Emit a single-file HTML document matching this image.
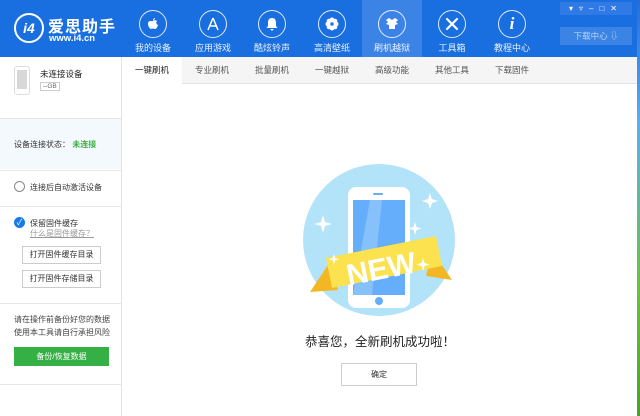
<!DOCTYPE html>
<html><head><meta charset="utf-8"><style>
*{margin:0;padding:0;box-sizing:border-box}
body{width:640px;height:416px;overflow:hidden;background:#fff;font-family:"Liberation Sans","Noto Sans CJK SC",sans-serif;position:relative}
.hdr{position:absolute;left:0;top:0;width:637px;height:57px;background:#1a6fe0}
.nav{position:absolute;top:0;width:60px;height:57px;text-align:center;color:#fff;font-size:9px}
.nav .ic{width:28px;height:28px;border:1.5px solid rgba(255,255,255,.85);border-radius:50%;margin:10px auto 0;display:flex;align-items:center;justify-content:center}
.nav .lb{margin-top:3px;opacity:.9}
.side{position:absolute;left:0;top:57px;width:122px;height:359px;border-right:1px solid #e3e3e3;font-size:8px;color:#333}
.tabs{position:absolute;left:122px;top:57px;width:515px;height:27px;background:#f5f5f5;border-bottom:1px solid #e3e3e3;font-size:8.5px;color:#555}
.tab{position:absolute;top:0;height:27px;line-height:27px;width:60px;text-align:center}
.btn{position:absolute;left:22px;width:79px;height:18px;border:1px solid #ccc;background:#fff;font-size:8px;text-align:center;line-height:16px;color:#333}
.hr{position:absolute;left:0;width:121px;border-top:1px solid #e6e6e6}
</style></head><body>
<div class="hdr">
 <div style="position:absolute;left:14px;top:13px;width:30px;height:30px;border:2px solid #fff;border-radius:50%;color:#fff;font-weight:bold;font-size:14px;text-align:center;line-height:26px;font-style:italic">i4</div>
 <div style="position:absolute;left:48px;top:13px;color:#fff;font-size:16px;font-weight:bold;letter-spacing:1px">爱思助手</div>
 <div style="position:absolute;left:49px;top:33px;color:#fff;font-size:9.5px;font-weight:bold">www.i4.cn</div>
 <div class="nav" style="left:123px"><div class="ic"><svg width="14" height="14" viewBox="0 0 14 14"><path d="M7 4c1-1 3-1 4 0-1 1-1 3 1 4-1 3-2 4-3 4s-1-.5-2-.5-1 .5-2 .5-3-3-3-5 1-3 2.5-3 1.5.5 2.5 0zM7 3.5C7 2 8 1 9 1c0 1-1 2.5-2 2.5z" fill="#fff"/></svg></div><div class="lb">我的设备</div></div>
 <div class="nav" style="left:183px"><div class="ic"><svg width="16" height="16" viewBox="0 0 16 16" fill="none" stroke="#fff" stroke-width="1.5"><path d="M8 2L3 14M8 2l5 12M4 10h8"/></svg></div><div class="lb">应用游戏</div></div>
 <div class="nav" style="left:242px"><div class="ic"><svg width="14" height="14" viewBox="0 0 14 14"><path d="M7 1c3 0 4 2 4 5v3l1.5 2h-11L3 9V6c0-3 1-5 4-5zM5.5 12h3a1.5 1.5 0 0 1-3 0z" fill="#fff"/></svg></div><div class="lb">酷炫铃声</div></div>
 <div class="nav" style="left:302px"><div class="ic"><svg width="16" height="16" viewBox="0 0 16 16" fill="#fff"><circle cx="8" cy="4" r="2.5"/><circle cx="8" cy="12" r="2.5"/><circle cx="4" cy="8" r="2.5"/><circle cx="12" cy="8" r="2.5"/><circle cx="5" cy="5" r="2.3"/><circle cx="11" cy="5" r="2.3"/><circle cx="5" cy="11" r="2.3"/><circle cx="11" cy="11" r="2.3"/></svg></div><div class="lb">高清壁纸</div></div>
 <div class="nav" style="left:362px;background:#3b84e6"><div class="ic"><svg width="16" height="14" viewBox="0 0 16 14" fill="#fff"><path d="M2 3l3-2 3 2 3-2 3 2-2 2 2 2-3 1v4H5V8L2 7l2-2z"/></svg></div><div class="lb">刷机越狱</div></div>
 <div class="nav" style="left:422px"><div class="ic"><svg width="16" height="16" viewBox="0 0 16 16" stroke="#fff" stroke-width="2.2" stroke-linecap="round"><path d="M3 3l10 10M13 3L3 13"/></svg></div><div class="lb">工具箱</div></div>
 <div class="nav" style="left:482px"><div class="ic" style="font-weight:bold;font-style:italic;font-family:'Liberation Serif',serif;font-size:17px">i</div><div class="lb">教程中心</div></div>
 <div style="position:absolute;left:560px;top:27px;width:72px;height:18px;background:#3b84e6;color:#bcd4f5;font-size:8.5px;line-height:18px;text-align:center">下载中心 ⇩</div>
 <div style="position:absolute;left:560px;top:2px;width:72px;height:13px;background:#2f7ae4;color:#fff;font-size:8px;line-height:13px;letter-spacing:6px;text-align:center">▾▿–□✕</div>
</div>
<div style="position:absolute;left:637px;top:0;width:3px;height:416px;background:linear-gradient(#2a6ad8,#5ab0f0 30%,#6fbf3a 70%,#4aa028)"></div>
<div class="side">
 <div style="position:absolute;left:14px;top:9px;width:16px;height:29px;border:1px solid #ddd;border-radius:3px;background:#fff"><div style="margin:3px 2px;height:19px;background:#d8d8d8"></div></div>
 <div style="position:absolute;left:40px;top:11px;font-size:8.5px;color:#222">未连接设备</div>
 <div style="position:absolute;left:40px;top:25px;border:1px solid #ccc;font-size:6.5px;padding:0 2px;color:#666">--GB</div>
 <div class="hr" style="top:61px"></div>
 <div style="position:absolute;left:0;top:62px;width:121px;height:50px;background:#f4f9fd"></div>
 <div style="position:absolute;left:14px;top:82px">设备连接状态： <span style="color:#3ab03e;font-weight:bold">未连接</span></div>
 <div class="hr" style="top:113px"></div>
 <div style="position:absolute;left:14px;top:124px;width:11px;height:11px;border:1px solid #888;border-radius:50%"></div>
 <div style="position:absolute;left:30px;top:125px">连接后自动激活设备</div>
 <div class="hr" style="top:149px"></div>
 <div style="position:absolute;left:14px;top:160px;width:11px;height:11px;background:#1a7ae8;border-radius:50%;color:#fff;font-size:8px;line-height:11px;text-align:center">✓</div>
 <div style="position:absolute;left:30px;top:161px">保留固件缓存</div>
 <div style="position:absolute;left:30px;top:171px;color:#999;text-decoration:underline">什么是固件缓存？</div>
 <div class="btn" style="top:189px">打开固件缓存目录</div>
 <div class="btn" style="top:213px">打开固件存储目录</div>
 <div class="hr" style="top:246px"></div>
 <div style="position:absolute;left:14px;top:256px;line-height:13px;color:#444">请在操作前备份好您的数据<br>使用本工具请自行承担风险</div>
 <div style="position:absolute;left:14px;top:290px;width:95px;height:19px;background:#35b045;color:#fff;line-height:19px;text-align:center">备份/恢复数据</div>
 <div class="hr" style="top:327px"></div>
</div>
<div class="tabs">
 <div class="tab" style="left:0;background:#fff;color:#222;height:28px">一键刷机</div>
 <div class="tab" style="left:60px">专业刷机</div>
 <div class="tab" style="left:120px">批量刷机</div>
 <div class="tab" style="left:180px">一键越狱</div>
 <div class="tab" style="left:240px">高级功能</div>
 <div class="tab" style="left:300px">其他工具</div>
 <div class="tab" style="left:360px">下载固件</div>
</div>
<svg style="position:absolute;left:290px;top:150px" width="180" height="170" viewBox="0 0 180 170">
 <circle cx="89" cy="90" r="76" fill="#b3e3f8"/>
 <rect x="58" y="37" width="62" height="121" rx="8" fill="#fff"/>
 <rect x="63" y="50" width="52" height="95" fill="#64aefc"/>
 <path d="M80 50h12l-10 95h-19z" fill="#86c1fc"/>
 <circle cx="89" cy="151" r="4" fill="#64aefc"/>
 <rect x="83" y="43" width="10" height="2" rx="1" fill="#64aefc"/>
 <path d="M20 142l20-30 8 28z" fill="#f4b724"/>
 <path d="M162 130l-20-30-6 26z" fill="#f4b724"/>
 <path d="M36 108l110-22 6 30-110 22z" fill="#fde24f"/>
 <text x="91" y="129" font-family="Liberation Sans" font-weight="bold" font-size="30" fill="#fff" text-anchor="middle" transform="rotate(-11 91 118)">NEW</text>
 <path d="M33 65l2 7 7 2-7 2-2 7-2-7-7-2 7-2z" fill="#fff"/>
 <path d="M140 43l2 6 6 2-6 2-2 6-2-6-6-2 6-2z" fill="#fff"/>
 <path d="M125 72l1.5 5 5 1.5-5 1.5-1.5 5-1.5-5-5-1.5 5-1.5z" fill="#fff"/>
 <path d="M133 108l1.5 5 5 1.5-5 1.5-1.5 5-1.5-5-5-1.5 5-1.5z" fill="#fff"/>
 <path d="M44 104l1.2 4 4 1.2-4 1.2-1.2 4-1.2-4-4-1.2 4-1.2z" fill="#fff"/>
</svg>
<div style="position:absolute;left:290px;top:331px;width:180px;text-align:center;font-size:12.5px;color:#222">恭喜您，全新刷机成功啦！</div>
<div style="position:absolute;left:341px;top:363px;width:76px;height:23px;border:1px solid #ccc;font-size:8px;text-align:center;line-height:21px;color:#333">确定</div>
</body></html>
